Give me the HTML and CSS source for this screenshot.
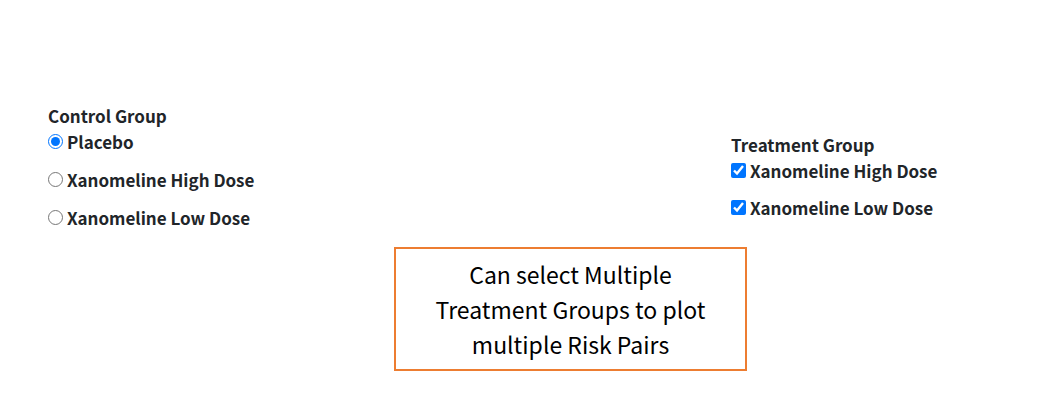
FILE: index.html
```html
<!DOCTYPE html>
<html lang="en">
<head>
<meta charset="utf-8">
<meta name="viewport" content="width=device-width, initial-scale=1">
<title>Risk group selection</title>
<link rel="stylesheet" href="styles.css">
</head>
<body>
<main class="page">
  <div class="groups">
    <fieldset class="group">
      <legend class="group-title">Control Group</legend>
      <label class="option"><input class="control" type="radio" name="control" checked><span>Placebo</span></label>
      <label class="option"><input class="control" type="radio" name="control"><span>Xanomeline High Dose</span></label>
      <label class="option"><input class="control" type="radio" name="control"><span>Xanomeline Low Dose</span></label>
    </fieldset>
    <fieldset class="group group-treatment">
      <legend class="group-title">Treatment Group</legend>
      <label class="option"><input class="control" type="checkbox" name="treatment" checked><span>Xanomeline High Dose</span></label>
      <label class="option"><input class="control" type="checkbox" name="treatment" checked><span>Xanomeline Low Dose</span></label>
    </fieldset>
  </div>
  <div class="note-row">
    <p class="note">Can select Multiple Treatment Groups to plot multiple Risk Pairs</p>
  </div>
</main>
</body>
</html>
```
FILE: styles.css
```css
* {
  box-sizing: border-box;
}

body {
  margin: 0;
  background: #fff;
  color: #212529;
  font-family: "Noto Sans CJK SC", "Noto Sans", sans-serif;
}

.page {
  padding: 103px 48px 40px;
}

.groups {
  display: grid;
  grid-template-columns: 683fr 269fr;
  align-items: start;
}

.group {
  min-width: 0;
  margin: 0;
  padding: 0;
  border: 0;
  font-size: 17px;
  font-weight: 700;
  line-height: 26px;
}

.group-treatment {
  margin-top: 29px;
}

.group-title {
  padding: 0;
}

.option {
  display: flex;
  align-items: flex-start;
  gap: 4px;
  margin-bottom: 12px;
}

.group-treatment .option {
  margin-bottom: 11px;
}

.control {
  flex: none;
  width: 15px;
  height: 15px;
  margin: 5px 0 0;
  accent-color: #0075ff;
}

.note-row {
  display: grid;
  grid-template-columns: 346fr minmax(353px, 353fr) 253fr;
  margin-top: 4px;
}

.note {
  grid-column: 2;
  margin: 0;
  padding: 8px 28px 7px;
  border: 2px solid #ed7d31;
  color: #000;
  font-size: 23px;
  line-height: 35px;
  text-align: center;
}
```
